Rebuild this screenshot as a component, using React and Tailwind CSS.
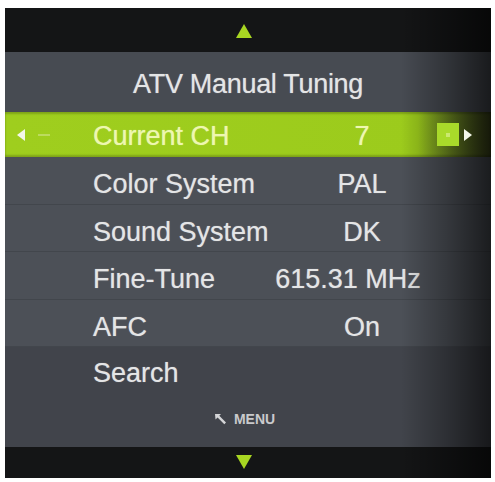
const rows = [
  { label: 'Color System', value: 'PAL', box: 'w-[144px]' },
  { label: 'Sound System', value: 'DK', box: 'w-[144px]' },
  { label: 'Fine-Tune', value: '615.31 MHz', box: '-ml-[28px] w-[172px]' },
  { label: 'AFC', value: 'On', box: 'w-[144px]' },
]

function Tri({ down }) {
  return (
    <svg width="18" height="16" viewBox="0 0 18 16">
      <polygon
        points={down ? '1,1 17,1 9,15' : '9,1 17,15 1,15'}
        fill="#a8d622"
      />
    </svg>
  )
}

export default function App() {
  return (
    <div className="w-[495px] h-[482px] bg-white pt-2 pl-[5px] font-['Liberation_Sans',Arial,sans-serif]">
      <div className="relative w-[486px] h-[470px] flex flex-col overflow-hidden bg-[#141516]">
        {/* top bar */}
        <div className="h-[44px] flex items-center justify-center pr-[8px] pt-[2px] bg-[#141516]">
          <Tri />
        </div>

        {/* panel */}
        <div className="h-[395px] flex flex-col bg-[#474b52] text-[27px] text-[#e4e5e6] whitespace-nowrap [text-shadow:0_0_1px_rgba(255,255,255,0.5)]">
          <div className="h-[60px] flex items-center justify-center pt-1 tracking-[-0.3px]">
            ATV Manual Tuning
          </div>

          {/* selected row */}
          <div className="h-[45px] flex items-center bg-gradient-to-r from-[#9fce1e] via-[#9ccb1c] via-85% to-[#3d461b] shadow-[inset_0_2px_2px_rgba(0,0,0,0.2),inset_0_-2px_2px_rgba(0,0,0,0.2)] text-[#eef7b0]">
            <div className="w-[88px] flex items-center shrink-0">
              <svg width="10" height="12" viewBox="0 0 10 12" className="ml-[11px]">
                <polygon points="9,0 9,12 1,6" fill="#f4f7ea" />
              </svg>
              <div className="ml-[12px] w-[12px] h-[2px] bg-[#bcdb5e]" />
            </div>
            <div className="w-[197px] shrink-0 pt-1">Current CH</div>
            <div className="w-[144px] shrink-0 text-center pt-1">7</div>
            <div className="relative z-10 ml-[3px] w-[22px] h-[23px] shrink-0 bg-[#a9da2a] flex items-center justify-center">
              <div className="w-[4px] h-[4px] bg-[#cbe96f]" />
            </div>
            <svg width="10" height="12" viewBox="0 0 10 12" className="relative z-10 ml-[4px] shrink-0">
              <polygon points="1,0 1,12 9,6" fill="#f4f7ea" />
            </svg>
          </div>

          {rows.map((r) => (
            <div
              key={r.label}
              className="h-[47.5px] flex items-center pt-2 bg-[#4c5057] border-b border-[#42464c]"
            >
              <div className="pl-[88px] w-[285px] shrink-0">{r.label}</div>
              <div className={`${r.box} shrink-0 text-center`}>{r.value}</div>
            </div>
          ))}

          <div className="flex-1 flex flex-col bg-[#41444b]">
            <div className="h-[52px] flex items-center pl-[88px]">Search</div>
            <div className="flex items-center justify-center gap-[3px] pr-[8px] pt-[10px] text-[14px] font-bold text-[#c9cacc] [text-shadow:none]">
              <svg width="18" height="15" viewBox="0 0 18 15">
                <path d="M2 2 L8 2 L6.3 3.7 L13 10.5 L11.3 12.2 L4.6 5.4 L2.5 7.5 Z" fill="#d4d5d7" />
              </svg>
              MENU
            </div>
          </div>
        </div>

        {/* bottom bar */}
        <div className="flex-1 flex items-center justify-center pr-[8px] pb-[2px] bg-[#141516]">
          <Tri down />
        </div>

        {/* right vignette over the screen edge */}
        <div className="absolute top-0 right-0 w-[90px] h-full pointer-events-none bg-gradient-to-r from-transparent via-black/30 to-black/65" />
      </div>
    </div>
  )
}
